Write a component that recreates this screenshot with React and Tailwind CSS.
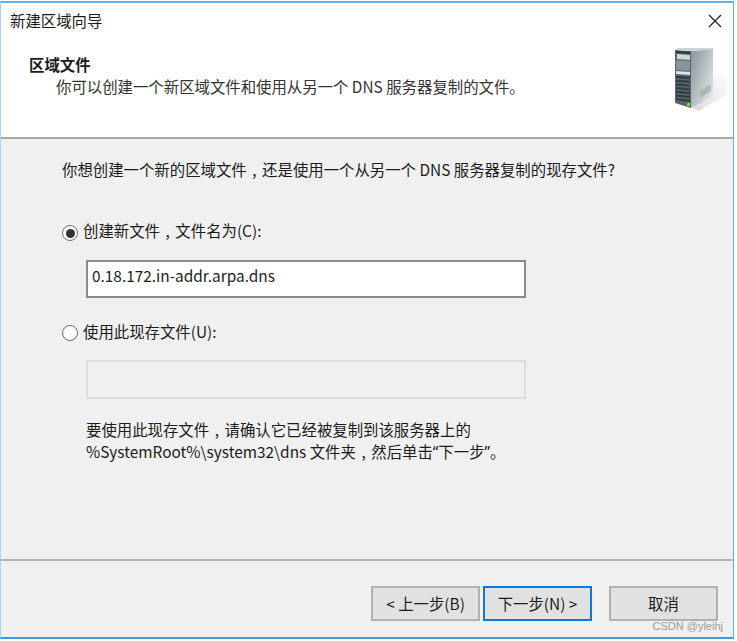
const font = { fontFamily: '"Noto Sans CJK SC", "Noto Sans", sans-serif' };

function Server() {
  const rows = [0, 1, 2, 3, 4, 5, 6];
  return (
    <svg width="54" height="64" viewBox="0 0 54 64" className="block shrink-0">
      <defs>
        <linearGradient id="side" x1="0" y1="0" x2="1" y2="0.8">
          <stop offset="0" stopColor="#87949a" />
          <stop offset="0.5" stopColor="#b4bdc0" />
          <stop offset="1" stopColor="#e4e7e8" />
        </linearGradient>
        <linearGradient id="shadow" x1="0" y1="1" x2="1" y2="0">
          <stop offset="0" stopColor="#dadada" />
          <stop offset="1" stopColor="#ffffff" />
        </linearGradient>
      </defs>
      <path d="M18 60 L38 26 L52 24 L52 46 L24 63 Z" fill="url(#shadow)" />
      <path d="M0 2 L16 3 L16 60 L0 55 Z" fill="#59646a" />
      <path d="M16 3 L38 1 L38 48 L16 60 Z" fill="url(#side)" />
      <path d="M0 2 L2 0 L38 0 L38 1 L16 3 Z" fill="#cfd4d5" />
      <path d="M1 3 L15 4 L15 6 L1 5 Z" fill="#2f383c" />
      <path d="M2 6 L15 7 L15 12 L2 11 Z" fill="#cdd8da" />
      <path d="M1 12 L15 13 L15 23 L1 22 Z" fill="#87959a" />
      <path d="M1 23 L15 24 L15 27 L1 26 Z" fill="#dfe5e6" />
      {rows.map((i) => (
        <path
          key={i}
          d={`M1 ${28 + i * 3.7} L15 ${29 + i * 3.8} L15 ${31 + i * 3.8} L1 ${30 + i * 3.7} Z`}
          fill="#343c40"
        />
      ))}
      <rect x="12" y="55" width="3" height="3" fill="#7fe04a" />
      <path d="M25 50 L36 43 L36 36 L25 43 Z" fill="#8f9a9d" opacity="0.5" />
    </svg>
  );
}

function Radio({ checked, className }) {
  return (
    <span className={'flex h-4 w-4 shrink-0 items-center justify-center rounded-full border border-[#6a6a6a] bg-white ' + className}>
      {checked && <span className="h-[9px] w-[9px] rounded-full bg-[#333333]" />}
    </span>
  );
}

function Comma() {
  return <span className="inline-block w-[1em] text-center">,</span>;
}

function Btn({ children, primary }) {
  return (
    <div
      className={
        'flex h-[35px] w-[109px] items-center justify-center bg-[#e1e1e1] text-[15.4px] text-[#1c1c1c] ' +
        (primary ? 'border-2 border-[#0f78d4]' : 'border-2 border-[#b0b0b0]')
      }
    >
      {children}
    </div>
  );
}

export default function App() {
  return (
    <div className="h-[641px] w-[737px] overflow-hidden bg-white pt-px" style={font}>
      <div className="relative flex h-[638px] w-[734px] flex-col border-x border-y-2 border-x-[#a9d2f5] border-t-[#64b0ee] border-b-[#3c99e8] border-r-[#64b0ee] bg-white text-[#1c1c1c]">
        <div className="h-[134px] shrink-0 bg-white">
          <div className="flex h-9 items-center justify-between pl-[9px] pr-[11px]">
            <span className="pb-[3px] text-[15.4px] leading-5">新建区域向导</span>
            <svg width="14" height="14" viewBox="0 0 14 14">
              <path d="M1 1 L13 13 M13 1 L1 13" stroke="#222222" strokeWidth="1.3" fill="none" />
            </svg>
          </div>
          <div className="flex items-start justify-between pl-[28px] pr-[4px]">
            <div className="pt-[15px]">
              <div className="text-[15.4px] font-bold leading-5">区域文件</div>
              <div className="pl-[27px] pt-[2px] text-[15.4px] leading-5 text-[#333333]">
                你可以创建一个新区域文件和使用从另一个 DNS 服务器复制的文件。
              </div>
            </div>
            <div className="pt-[9px]">
              <Server />
            </div>
          </div>
        </div>
        <div className="h-[2px] shrink-0 bg-[#a8a8a8]" />
        <div className="flex flex-1 flex-col bg-[#f0f0f0]">
          <div className="h-[420px] shrink-0 pl-[61px] text-[15.4px] leading-5">
            <div className="pt-[20px]">
              你想创建一个新的区域文件<Comma />还是使用一个从另一个 DNS 服务器复制的现存文件?
            </div>
            <div className="mt-[41px] flex items-start gap-[5px]">
              <Radio checked className="mt-[5px]" />
              <span>
                创建新文件<Comma />文件名为(C):
              </span>
            </div>
            <div className="ml-[24px] mt-[19px] flex h-[38px] w-[440px] items-center border-2 border-[#8a8a8a] bg-white pb-[8px] pl-[4px]">
              0.18.172.in-addr.arpa.dns
            </div>
            <div className="mt-[23px] flex items-start gap-[5px]">
              <Radio className="mt-[4px]" />
              <span>使用此现存文件(U):</span>
            </div>
            <div className="ml-[24px] mt-[19px] h-[39px] w-[440px] border-2 border-[#dcdcdc] bg-[#f0f0f0]" />
            <div className="ml-[24px] mt-[19px] leading-[22px]">
              <div>
                要使用此现存文件<Comma />请确认它已经被复制到该服务器上的
              </div>
              <div>
                %SystemRoot%\system32\dns 文件夹<Comma />然后单击
                <span style={{ fontFamily: '"Noto Sans", sans-serif' }}>“</span>下一步
                <span style={{ fontFamily: '"Noto Sans", sans-serif' }}>”</span>。
              </div>
            </div>
          </div>
          <div className="h-[2px] shrink-0 bg-[#b4b4b4]" />
          <div className="flex flex-1 items-start pl-[370px] pt-[25px]">
            <Btn>&lt; 上一步(B)</Btn>
            <div className="ml-[3px]">
              <Btn primary>下一步(N) &gt;</Btn>
            </div>
            <div className="ml-[17px]">
              <Btn>取消</Btn>
            </div>
          </div>
        </div>
        <span
          className="absolute bottom-[3px] right-[10px] text-[11px] leading-4 text-[#9a9a9a]"
          style={{ fontFamily: '"Liberation Sans", sans-serif' }}
        >
          CSDN @yleihj
        </span>
      </div>
    </div>
  );
}
